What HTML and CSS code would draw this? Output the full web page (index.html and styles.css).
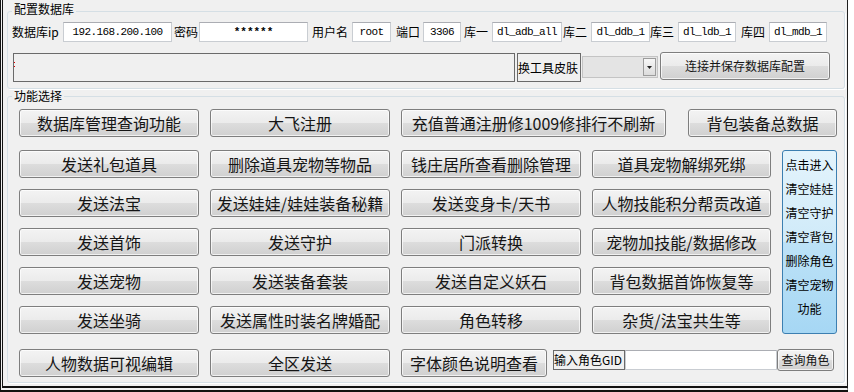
FILE: index.html
```html
<!DOCTYPE html>
<html lang="zh-CN">
<head>
    <meta charset="UTF-8">
    <meta name="viewport" content="width=device-width, initial-scale=1.0">
    <title>数据库工具</title>
    <link rel="stylesheet" href="styles.css">
</head>
<body>
    <div class="window">
        <fieldset class="group">
            <legend class="legend-db">配置数据库</legend>
            <div class="db-body">
                <div class="db-row">
                    <span class="lbl" style="width:51px">数据库ip</span>
                    <input class="field" style="width:109px" value="192.168.200.100" readonly>
                    <span class="lbl" style="width:25px;padding-left:2px">密码</span>
                    <input class="field pwd" style="width:109px" value="******" readonly>
                    <span class="lbl" style="width:40px;padding-left:4px">用户名</span>
                    <input class="field" style="width:39px" value="root" readonly>
                    <span class="lbl" style="width:27px;padding-left:5px">端口</span>
                    <input class="field" style="width:38px" value="3306" readonly>
                    <span class="lbl" style="width:28px;padding-left:3px">库一</span>
                    <input class="field" style="width:70px" value="dl_adb_all" readonly>
                    <span class="lbl" style="width:28px;padding-left:1px">库二</span>
                    <input class="field" style="width:59px" value="dl_ddb_1" readonly>
                    <span class="lbl" style="width:28px">库三</span>
                    <input class="field" style="width:58px" value="dl_ldb_1" readonly>
                    <span class="lbl" style="width:28px;padding-left:5px">库四</span>
                    <input class="field" style="width:58px" value="dl_mdb_1" readonly>
                </div>
                <div class="db-row2">
                    <div class="log"><span class="caret"></span></div>
                    <span class="skin-lbl">换工具皮肤</span>
                    <div class="combo">
                        <span class="combo-btn">
                            <svg width="5" height="3" viewBox="0 0 5 3"><polygon points="0,0 5,0 2.5,3" fill="#222"/></svg>
                        </span>
                    </div>
                    <button class="btn btn-sm btn-connect">连接并保存数据库配置</button>
                </div>
            </div>
        </fieldset>

        <fieldset class="group group-fn">
            <legend>功能选择</legend>
            <div class="fn-body">
                <div class="fn-top">
                    <button class="btn w180">数据库管理查询功能</button>
                    <button class="btn w180">大飞注册</button>
                    <button class="btn w265">充值普通注册修1009修排行不刷新</button>
                    <button class="btn w149 gap-wide">背包装备总数据</button>
                </div>

                <div class="fn-mid">
                    <div class="fn-grid">
                        <button class="btn">发送礼包道具</button>
                        <button class="btn">删除道具宠物等物品</button>
                        <button class="btn">钱庄居所查看删除管理</button>
                        <button class="btn">道具宠物解绑死绑</button>

                        <button class="btn">发送法宝</button>
                        <button class="btn">发送娃娃/娃娃装备秘籍</button>
                        <button class="btn">发送变身卡/天书</button>
                        <button class="btn">人物技能积分帮贡改道</button>

                        <button class="btn">发送首饰</button>
                        <button class="btn">发送守护</button>
                        <button class="btn">门派转换</button>
                        <button class="btn">宠物加技能/数据修改</button>

                        <button class="btn">发送宠物</button>
                        <button class="btn">发送装备套装</button>
                        <button class="btn">发送自定义妖石</button>
                        <button class="btn">背包数据首饰恢复等</button>

                        <button class="btn">发送坐骑</button>
                        <button class="btn">发送属性时装名牌婚配</button>
                        <button class="btn">角色转移</button>
                        <button class="btn">杂货/法宝共生等</button>
                    </div>
                    <div class="panel">点击进入<br>清空娃娃<br>清空守护<br>清空背包<br>删除角色<br>清空宠物<br>功能</div>
                </div>

                <div class="fn-bottom">
                    <button class="btn w180">人物数据可视编辑</button>
                    <button class="btn w180">全区发送</button>
                    <button class="btn w146">字体颜色说明查看</button>
                    <span class="gid-lbl">输入角色GID</span>
                    <input class="gid-input" value="">
                    <button class="btn btn-sm btn-query">查询角色</button>
                </div>
            </div>
        </fieldset>
    </div>
</body>
</html>
```

FILE: styles.css
```css
body {
    margin: 0;
    background: #ffffff;
    font-family: "Noto Sans CJK SC", "Liberation Sans", sans-serif;
    color: #000;
}

.window {
    width: 848px;
    height: 392px;
    box-sizing: border-box;
    padding-top: 3px;
    background: #f0f0f0;
    border-left: 3px double #111;
    border-right: 1px solid #1e1e1e;
    border-bottom: 6px double #111;
    overflow: hidden;
}

/* group boxes */
.group {
    width: 838px;
    box-sizing: border-box;
    margin: 0 0 0 4px;
    padding: 0;
    min-width: 0;
    border: 1px solid #d5dfe5;
    border-radius: 3px;
    box-shadow: 1px 1px 0 #ffffff;
}

.group legend {
    margin-left: 4px;
    padding: 0 2px;
    font-size: 12px;
    line-height: 12px;
}

.group .legend-db {
    padding-bottom: 4px;
}

.group-fn {
    margin-top: 1px;
}

/* database config */
.db-body {
    padding: 3px 0 6px 4px;
}

.db-row {
    display: flex;
    height: 20px;
}

.lbl {
    flex: none;
    font-size: 12px;
    line-height: 20px;
    white-space: nowrap;
}

.field {
    flex: none;
    box-sizing: border-box;
    height: 20px;
    margin: 0;
    padding: 0;
    border: 1px solid #c9cdd2;
    border-top-color: #abadb3;
    background: #ffffff;
    font-family: "Liberation Mono", monospace;
    font-size: 11px;
    letter-spacing: -0.6px;
    text-align: center;
    color: #000;
    outline: none;
}

.field.pwd {
    font-weight: bold;
    letter-spacing: 0;
}

.db-row2 {
    display: flex;
    align-items: flex-start;
    margin-top: 10px;
    height: 30px;
}

.log {
    width: 502px;
    height: 29px;
    box-sizing: border-box;
    margin: 1px 0 0 1px;
    border: 1px solid #6a6a6a;
    background: #f0f0f0;
}

.caret {
    display: block;
    width: 1px;
    height: 5px;
    margin-top: 8px;
    background: linear-gradient(#e00000 0 1px, transparent 1px 4px, #e00000 4px);
}

.skin-lbl {
    width: 64px;
    height: 29px;
    box-sizing: border-box;
    margin: 1px 0 0 2px;
    border: 1px solid #6a6a6a;
    font-size: 12px;
    line-height: 27px;
    white-space: nowrap;
}

.combo {
    width: 76px;
    height: 22px;
    box-sizing: border-box;
    margin: 4px 0 0 1px;
    border: 1px solid #c4c4c4;
    background: #e4e4e4;
    display: flex;
    justify-content: flex-end;
}

.combo-btn {
    width: 13px;
    margin: 1px;
    box-sizing: border-box;
    border: 1px solid #9c9c9c;
    background: linear-gradient(#f7f7f7, #dcdcdc);
    display: flex;
    align-items: center;
    justify-content: center;
}

/* buttons */
.btn {
    flex: none;
    box-sizing: border-box;
    height: 28px;
    margin: 0;
    padding: 0;
    border: 1px solid #7e7e7e;
    border-radius: 3px;
    background: linear-gradient(#f3f3f3, #ebebeb 50%, #dddddd 50%, #d0d0d0);
    box-shadow: inset 0 0 0 1px rgba(255, 255, 255, 0.7);
    font-family: "Noto Sans CJK SC", sans-serif;
    font-size: 16px;
    line-height: 1;
    color: #151515;
    white-space: nowrap;
}

.btn-sm {
    font-size: 12px;
}

.btn-connect {
    width: 170px;
    margin-left: 2px;
}

.w180 { width: 180px; }
.w265 { width: 265px; }
.w149 { width: 149px; }
.w146 { width: 146px; }

/* function area */
.fn-body {
    padding: 7px 0 5px 11px;
}

.fn-top {
    display: flex;
    gap: 11px;
}

.fn-top .gap-wide {
    margin-left: 11px;
}

.fn-mid {
    display: flex;
    margin-top: 13px;
}

.fn-grid {
    display: grid;
    grid-template-columns: 180px 180px 180px 179px;
    grid-auto-rows: 28px;
    column-gap: 11px;
    row-gap: 11px;
}

.fn-grid .btn {
    width: auto;
}

.panel {
    width: 55px;
    margin-left: 11px;
    padding-top: 2px;
    box-sizing: border-box;
    border: 1px solid #3c7fb1;
    border-radius: 3px;
    background: linear-gradient(#e4f4fc, #cfeaf9 50%, #bde2f7 50%, #a6d7f4);
    font-size: 12px;
    line-height: 24px;
    color: #000;
    text-align: center;
    white-space: nowrap;
    cursor: pointer;
}

.fn-bottom {
    display: flex;
    align-items: flex-start;
    gap: 11px;
    margin-top: 15px;
}

.gid-lbl {
    width: 72px;
    height: 20px;
    box-sizing: border-box;
    margin: 1px 0 0 -5px;
    border: 1px solid #6a6a6a;
    font-size: 12px;
    line-height: 18px;
    white-space: nowrap;
    overflow: hidden;
}

.gid-input {
    width: 152px;
    height: 20px;
    box-sizing: border-box;
    margin: 1px 0 0 -11px;
    padding: 0;
    border: 1px solid #c9cdd2;
    border-top-color: #abadb3;
    background: #ffffff;
    outline: none;
}

.btn-query {
    width: 57px;
    height: 22px;
    margin-left: -11px;
}
```
